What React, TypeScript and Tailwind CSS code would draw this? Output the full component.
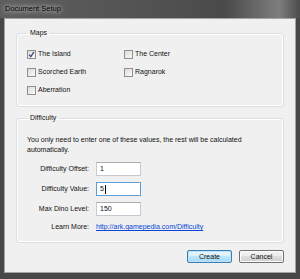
import React from "react";

function CheckBox({ label, checked }: { label: string; checked?: boolean }) {
  return (
    <div className="flex h-[18px] items-center gap-[2px]">
      <span className="flex h-[9px] w-[9px] items-center justify-center border border-[#8f8f8f] bg-gradient-to-br from-[#dcdcdc] to-[#fafafa]">
        {checked && (
          <svg width="7" height="7" viewBox="0 0 7 7">
            <path d="M1 3.6 L2.8 5.6 L6 0.8" fill="none" stroke="#3a4f7a" strokeWidth="1.3" />
          </svg>
        )}
      </span>
      <span>{label}</span>
    </div>
  );
}

function Field({ label, value, focused }: { label: string; value: string; focused?: boolean }) {
  return (
    <div className="flex h-[20px] items-center">
      <span className="w-[62px] text-right">{label}</span>
      <div
        className={
          focused
            ? "ml-[7px] flex h-[14px] w-[45px] items-center border border-[#5c9fd6] bg-white px-[3px]"
            : "ml-[7px] flex h-[14px] w-[45px] items-center border border-[#c5c9d1] border-t-[#abadb3] bg-white px-[3px]"
        }
      >
        <span>{value}</span>
        {focused && <span className="ml-px h-[9px] w-px bg-black" />}
      </div>
    </div>
  );
}

export default function App() {
  return (
    <div className="flex h-[279px] w-[300px] flex-col bg-[#474747] font-['Liberation_Sans',Arial,sans-serif] text-[7px] leading-[10px] text-[#111]">
      <div className="flex h-[18px] items-center bg-[linear-gradient(90deg,#5e5e5e_0%,#555_40%,#4a4a4a_75%,#7e7e7e_93%,#4c4c4c_100%)] pl-[5px]">
        <span className="text-[7.5px] text-black [text-shadow:0_0_4px_rgba(255,255,255,0.9),0_0_8px_rgba(255,255,255,0.6)]">
          Document Setup
        </span>
      </div>

      <div className="mx-[4px] mb-[6px] flex flex-1 flex-col border border-[#a3a3a3] bg-[#f0f0f0] px-[11px] pt-[8px]">
        <fieldset className="rounded-[3px] border border-[#d5dfe5] px-[10px] pb-[7px] pt-[6px] shadow-[inset_0_0_0_1px_#fff]">
          <legend className="px-[3px] leading-[12px]">Maps</legend>
          <div className="grid grid-cols-[97px_1fr]">
            <CheckBox label="The Island" checked />
            <CheckBox label="The Center" />
            <CheckBox label="Scorched Earth" />
            <CheckBox label="Ragnarok" />
            <CheckBox label="Aberration" />
          </div>
        </fieldset>

        <fieldset className="mt-[5px] rounded-[3px] border border-[#d5dfe5] px-[10px] pb-[7px] pt-[11px] shadow-[inset_0_0_0_1px_#fff]">
          <legend className="px-[3px] leading-[12px]">Difficulty</legend>
          <p>
            You only need to enter one of these values, the rest will be calculated
            <br />
            automatically.
          </p>
          <div className="mt-[4px] flex flex-col">
            <Field label="Difficulty Offset:" value="1" />
            <Field label="Difficulty Value:" value="5" focused />
            <Field label="Max Dino Level:" value="150" />
            <div className="flex h-[16px] items-center">
              <span className="w-[62px] text-right">Learn More:</span>
              <a className="ml-[7px] text-[#0645d8] underline" href="#">
                http://ark.gamepedia.com/Difficulty
              </a>
            </div>
          </div>
        </fieldset>

        <div className="mt-[7px] flex justify-end gap-[7px]">
          <button className="h-[13px] w-[45px] rounded-[2px] border border-[#3c7fb1] bg-[linear-gradient(#eaf6fd_0%,#d9f0fc_50%,#bee6fd_50%,#a7d9f5_100%)] text-[7px] leading-[10px] shadow-[inset_0_0_0_1px_#b9e3f8]">
            Create
          </button>
          <button className="h-[13px] w-[45px] rounded-[2px] border border-[#707070] bg-[linear-gradient(#f2f2f2_0%,#ebebeb_50%,#dddddd_50%,#cfcfcf_100%)] text-[7px] leading-[10px] shadow-[inset_0_0_0_1px_#fcfcfc]">
            Cancel
          </button>
        </div>
      </div>
    </div>
  );
}
